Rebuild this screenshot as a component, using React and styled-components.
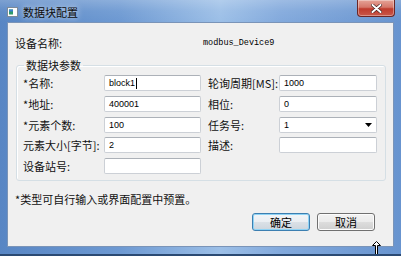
import styled, { createGlobalStyle } from 'styled-components'

const GlobalStyle = createGlobalStyle`
  body { margin: 0; background: #fff; }
  * { box-sizing: border-box; }
`

const cjk = `"Noto Sans CJK SC", "Liberation Sans", sans-serif`

const fields = [
  [{ label: '*名称:', value: 'block1', caret: true }, { label: '轮询周期[MS]:', value: '1000' }],
  [{ label: '*地址:', value: '400001' }, { label: '相位:', value: '0' }],
  [{ label: '*元素个数:', value: '100' }, { label: '任务号:', value: '1', combo: true }],
  [{ label: '元素大小[字节]:', value: '2' }, { label: '描述:', value: '' }],
  [{ label: '设备站号:', value: '' }, null],
]

const App = () => {
  return (
    <>
      <GlobalStyle />
      <Window>
        <TitleBar>
          <AppIcon width="11" height="10" viewBox="0 0 11 10">
            <rect x="0.5" y="0.5" width="10" height="9" fill="#fdfdfd" stroke="#7d8a99" />
            <rect x="2" y="2.5" width="4" height="5" fill="#2f9a6a" />
            <rect x="2" y="2.5" width="4" height="2" fill="#3b7fd0" />
          </AppIcon>
          <Title>数据块配置</Title>
          <CloseButton>
            <svg width="11" height="9" viewBox="0 0 11 9">
              <path d="M1.5 1 L9.5 8 M9.5 1 L1.5 8" stroke="#3a1a1a" strokeWidth="3.2" strokeLinecap="round" />
              <path d="M1.5 1 L9.5 8 M9.5 1 L1.5 8" stroke="#fff" strokeWidth="2" strokeLinecap="round" />
            </svg>
          </CloseButton>
        </TitleBar>
        <Client>
          <DeviceRow>
            <DeviceLabel>设备名称:</DeviceLabel>
            <DeviceName>modbus_Device9</DeviceName>
          </DeviceRow>
          <Group>
            <Legend>数据块参数</Legend>
            <Rows>
              {fields.map((row, i) => (
                <Row key={i}>
                  {row.map((f, j) =>
                    f ? (
                      <Field key={j} $right={j === 1}>
                        <Label $right={j === 1}>{f.label}</Label>
                        <Input $right={j === 1}>
                          {f.value}
                          {f.caret && <Caret />}
                          {f.combo && (
                            <Arrow width="7" height="4" viewBox="0 0 7 4">
                              <path d="M0 0 H7 L3.5 4 Z" fill="#000" />
                            </Arrow>
                          )}
                        </Input>
                      </Field>
                    ) : null
                  )}
                </Row>
              ))}
            </Rows>
          </Group>
          <Note>*类型可自行输入或界面配置中预置。</Note>
          <Buttons>
            <Button $primary>确定</Button>
            <Button>取消</Button>
          </Buttons>
        </Client>
        <Cursor width="9" height="16" viewBox="0 0 9 16">
          <path d="M4.5 0.5 L8.5 4.5 L5.5 4.5 L5.5 16 L3.5 16 L3.5 4.5 L0.5 4.5 Z" fill="#fff" stroke="#000" strokeWidth="1" />
        </Cursor>
      </Window>
    </>
  )
}

export default App

const Window = styled.div`
  position: relative;
  width: 401px;
  height: 256px;
  overflow: hidden;
  display: flex;
  flex-direction: column;
  background: linear-gradient(90deg, #5886c4 0%, #6d99d2 30%, #9cbfe7 55%, #82a9dc 70%, #6894cf 100%);
  border-bottom: 2px solid #2b4a73;
`
const TitleBar = styled.div`
  height: 22px;
  display: flex;
  align-items: flex-start;
  padding-left: 7px;
  background: linear-gradient(180deg, rgba(255, 255, 255, 0.22) 0%, rgba(255, 255, 255, 0.06) 50%, rgba(255, 255, 255, 0) 100%);
`
const AppIcon = styled.svg`
  margin-top: 7px;
`
const Title = styled.span`
  margin-left: 5px;
  margin-top: 5px;
  font-family: ${cjk};
  font-size: 11px;
  line-height: 14px;
  color: #0c0c0c;
  text-shadow: 0 0 6px rgba(255, 255, 255, 0.9);
`
const CloseButton = styled.div`
  margin-left: auto;
  margin-right: 6px;
  width: 38px;
  height: 17px;
  display: flex;
  align-items: center;
  justify-content: center;
  border: 1px solid #6b2626;
  border-top: none;
  border-radius: 0 0 4px 4px;
  background: linear-gradient(180deg, #e5a397 0%, #d5776a 45%, #bf3b2d 55%, #c8574a 100%);
  box-shadow: inset 0 0 0 1px rgba(255, 255, 255, 0.35);
`
const Client = styled.div`
  margin: 0 7px;
  height: 225px;
  background: #f0f0f0;
  border: 1px solid #7a94b8;
  display: flex;
  flex-direction: column;
  font-family: ${cjk};
  font-size: 11px;
  color: #111;
`
const DeviceRow = styled.div`
  display: flex;
  align-items: center;
  padding: 13px 0 0 7px;
  height: 27px;
  line-height: 14px;
`
const DeviceLabel = styled.span`
  width: 188px;
`
const DeviceName = styled.span`
  font-family: "Liberation Mono", monospace;
  font-size: 8.5px;
  color: #000;
`
const Group = styled.fieldset`
  margin: 8px 0 0 8px;
  width: 370px;
  padding: 0 8px 6px 6px;
  min-width: 0;
  border: 1px solid #d5dfe5;
  border-radius: 3px;
  box-shadow: inset 1px 1px 0 #fff;
`
const Legend = styled.legend`
  margin-left: 1px;
  padding: 0 2px;
  line-height: 14px;
`
const Rows = styled.div`
  margin-top: 3px;
  display: flex;
  flex-direction: column;
  gap: 4.75px;
`
const Row = styled.div`
  display: flex;
  height: 16px;
`
const Field = styled.div`
  display: flex;
  align-items: center;
  margin-left: ${(p) => (p.$right ? '7px' : '0')};
`
const Label = styled.span`
  width: ${(p) => (p.$right ? '71px' : '81px')};
  line-height: 14px;
  white-space: nowrap;
`
const Input = styled.div`
  position: relative;
  display: flex;
  align-items: center;
  width: ${(p) => (p.$right ? '98px' : '97px')};
  height: 16px;
  padding: 0 4px;
  background: #fff;
  border: 1px solid #ccd0d6;
  border-top-color: #acb1b8;
  border-radius: 2px;
  font-family: "Liberation Sans", sans-serif;
  font-size: 9px;
  color: #000;
`
const Caret = styled.span`
  width: 1px;
  height: 11px;
  margin-left: 1px;
  background: #000;
`
const Arrow = styled.svg`
  margin-left: auto;
`
const Note = styled.div`
  margin: 11px 0 0 7px;
  line-height: 14px;
`
const Buttons = styled.div`
  display: flex;
  justify-content: flex-end;
  gap: 7px;
  margin-top: 7px;
  padding-right: 18px;
`
const Button = styled.div`
  width: 58px;
  height: 18px;
  display: flex;
  align-items: center;
  justify-content: center;
  border: 1px solid ${(p) => (p.$primary ? '#3c7fb1' : '#707070')};
  border-radius: 3px;
  background: ${(p) =>
    p.$primary
      ? 'linear-gradient(180deg, #f2f5f8 0%, #eaeef2 50%, #dbe1e7 50%, #cdd5dd 100%)'
      : 'linear-gradient(180deg, #f2f2f2 0%, #ebebeb 50%, #dddddd 50%, #cfcfcf 100%)'};
  box-shadow: inset 0 0 0 1px ${(p) => (p.$primary ? '#8fd3f5' : '#fcfcfc')};
  line-height: 14px;
  color: #000;
`
const Cursor = styled.svg`
  position: absolute;
  left: 372px;
  top: 241px;
`
